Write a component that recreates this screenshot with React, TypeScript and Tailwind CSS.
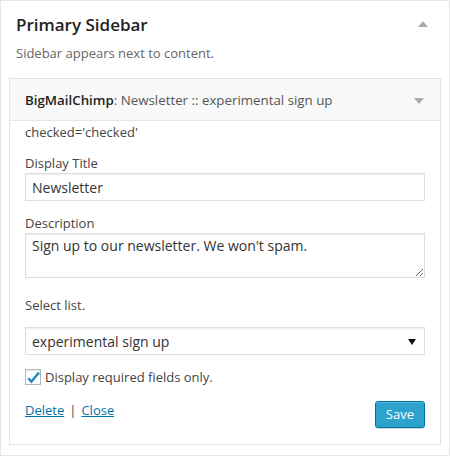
import React from 'react';

const font = { fontFamily: '"Open Sans", "Liberation Sans", sans-serif' };

export default function App() {
  return (
    <div className="h-[456px] w-[450px] bg-white" style={font}>
      <div className="box-border h-[456px] w-[450px] border border-[#e5e5e5] bg-white">
        {/* sidebar header */}
        <div className="relative px-[15px] pt-[11px]">
          <h2 className="text-[17px] font-semibold leading-[26px] text-[#222]">Primary Sidebar</h2>
          <span className="absolute right-[21px] top-[20px] h-0 w-0 border-x-[5px] border-b-[6px] border-x-transparent border-b-[#aaa]" />
          <p className="mt-[5px] text-[13px] leading-[20px] text-[#666]">Sidebar appears next to content.</p>
        </div>

        {/* widget */}
        <div className="mx-[8px] mt-[15px] border border-[#e5e5e5] bg-white">
          <div className="relative flex h-[42px] items-center border-b border-[#e5e5e5] bg-[#f9f9f9] px-[15px]">
            <h4 className="text-[13.3px] leading-[20px] text-[#555]">
              <span className="font-semibold text-[#222]">BigMailChimp</span>: Newsletter :: experimental sign up
            </h4>
            <span className="absolute right-[16px] top-[19px] h-0 w-0 border-x-[5px] border-t-[6px] border-x-transparent border-t-[#aaa]" />
          </div>

          <div className="px-[15px] pb-[16px] pt-[2px] text-[13px] text-[#444]">
            <p className="leading-[18px]">checked='checked'</p>

            <label className="mt-[13px] block leading-[18px]">Display Title</label>
            <input
              readOnly
              value="Newsletter"
              className="mt-[1px] box-border block h-[28px] w-full border border-[#ddd] px-[6px] text-[14px] text-[#333] shadow-[inset_0_1px_2px_rgba(0,0,0,0.07)] outline-none"
            />

            <label className="mt-[13px] block leading-[18px]">Description</label>
            <textarea
              readOnly
              value="Sign up to our newsletter. We won't spam."
              className="mt-[1px] box-border block h-[45px] w-full border border-[#ddd] px-[6px] py-[2px] text-[14px] leading-[20px] text-[#333] shadow-[inset_0_1px_2px_rgba(0,0,0,0.07)] outline-none"
            />

            <p className="mt-[18px] leading-[18px]">Select list.</p>
            <div className="relative mt-[13px] box-border flex h-[28px] w-full items-center border border-[#ddd] px-[6px] text-[14px] text-[#333] shadow-[inset_0_1px_2px_rgba(0,0,0,0.07)]">
              experimental sign up
              <span className="absolute right-[8px] top-[11px] h-0 w-0 border-x-[4px] border-t-[6px] border-x-transparent border-t-[#111]" />
            </div>

            <div className="mt-[13px] flex items-center gap-[4px]">
              <span className="relative box-border block h-[16px] w-[16px] border border-[#b4b9be] bg-white shadow-[inset_0_1px_2px_rgba(0,0,0,0.1)]">
                <svg className="absolute left-0 top-0" width="16" height="16" viewBox="0 0 16 16">
                  <path d="M2.2 8.2L5.4 11.6L13 2.6" fill="none" stroke="#1e8cbe" strokeWidth="2.4" strokeLinejoin="miter" />
                </svg>
              </span>
              <span className="leading-[18px]">Display required fields only.</span>
            </div>

            <div className="mt-[15px] flex items-start justify-between">
              <div className="leading-[18px]">
                <a className="text-[#0074a2] underline">Delete</a>
                <span className="mx-[5px]">|</span>
                <a className="text-[#0074a2] underline">Close</a>
              </div>
              <button className="box-border h-[27px] rounded-[3px] border border-[#0074a2] bg-[#2ea2cc] px-[10px] text-[13px] leading-[25px] text-white shadow-[inset_0_1px_0_rgba(120,200,230,0.5),0_1px_0_rgba(0,0,0,0.15)]">
                Save
              </button>
            </div>
          </div>
        </div>
      </div>
    </div>
  );
}
